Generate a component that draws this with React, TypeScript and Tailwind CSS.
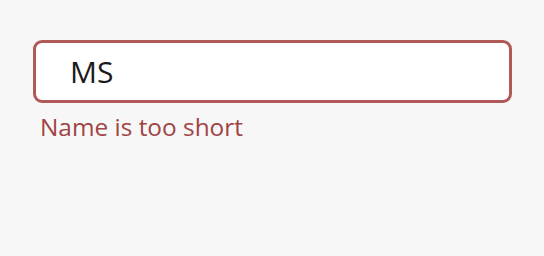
import React from "react";

export default function App() {
  return (
    <div className="w-[544px] h-[256px] bg-[#f7f7f7] pt-[40px] px-[33px]" style={{ fontFamily: '"Open Sans", sans-serif' }}>
      <div className="w-[479px] h-[63px] rounded-[9px] border-[3px] border-[#b05a58] bg-white flex items-center pl-[34px]">
        <span className="text-[30px] text-[#1a1a1a] leading-none">MS</span>
      </div>
      <div className="mt-[11px] pl-[7px] text-[24.4px] leading-[26px] text-[#a04444]">Name is too short</div>
    </div>
  );
}
